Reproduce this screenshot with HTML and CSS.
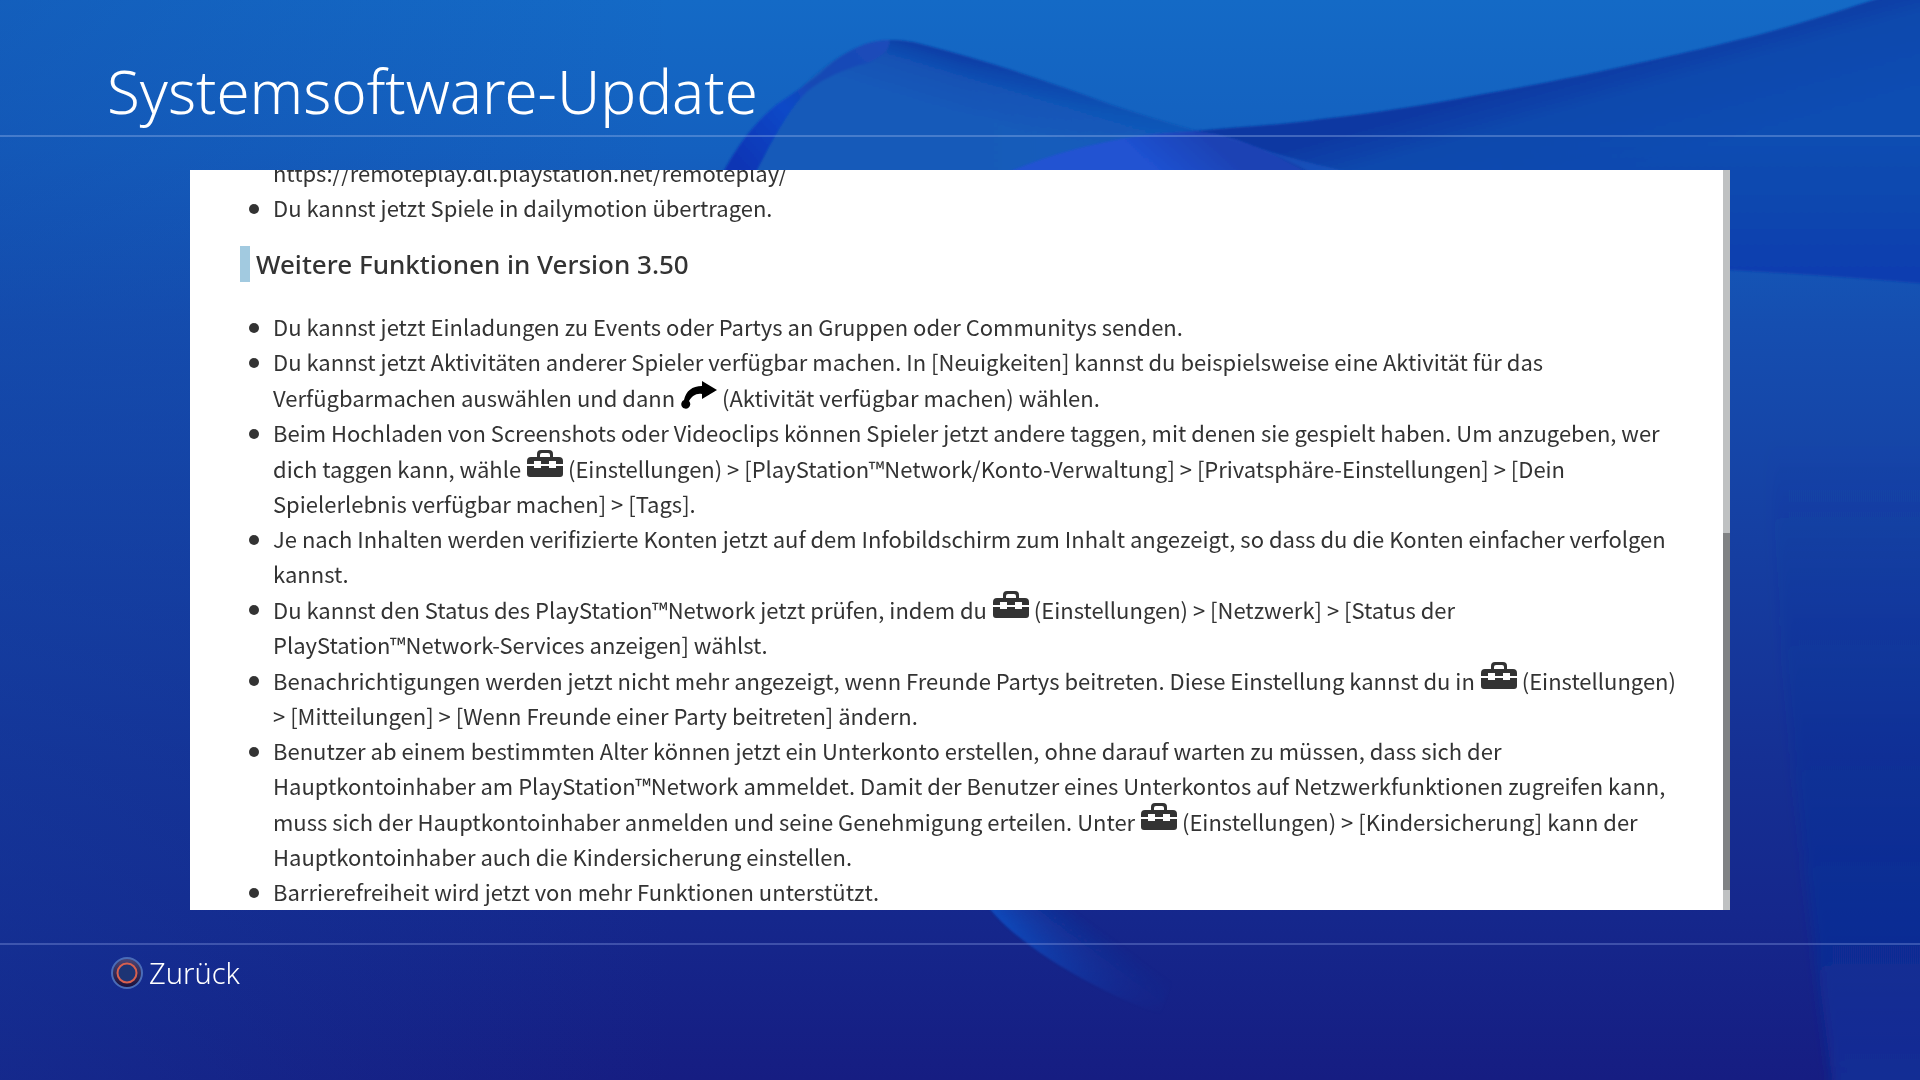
FILE: index.html
```html
<!DOCTYPE html>
<html lang="de">
<head>
<meta charset="utf-8">
<meta name="viewport" content="width=device-width, initial-scale=1">
<title>Systemsoftware-Update</title>
<link rel="stylesheet" href="styles.css">
</head>
<body>
<svg class="wallpaper" viewBox="0 0 1920 1080" preserveAspectRatio="none" aria-hidden="true">
  <defs>
    <linearGradient id="base" x1="0" y1="0" x2="0" y2="1">
      <stop offset="0" stop-color="#146ac6"/>
      <stop offset=".14" stop-color="#1460bf"/>
      <stop offset=".3" stop-color="#154eb0"/>
      <stop offset=".5" stop-color="#153fa2"/>
      <stop offset=".7" stop-color="#153094"/>
      <stop offset=".85" stop-color="#15278c"/>
      <stop offset="1" stop-color="#161d82"/>
    </linearGradient>
    <linearGradient id="left" x1="0" y1="0" x2="1" y2="0">
      <stop offset="0" stop-color="#1244a4" stop-opacity=".3"/>
      <stop offset=".35" stop-color="#1244a4" stop-opacity="0"/>
    </linearGradient>
    <linearGradient id="hill" gradientUnits="userSpaceOnUse" x1="1010" y1="68" x2="993" y2="124">
      <stop offset="0" stop-color="#0d3ba4"/>
      <stop offset=".4" stop-color="#1251b4"/>
      <stop offset="1" stop-color="#125ab9"/>
    </linearGradient>
    <linearGradient id="hillFade" gradientUnits="userSpaceOnUse" x1="960" y1="0" x2="1190" y2="0">
      <stop offset="0" stop-color="#1261bf" stop-opacity="0"/>
      <stop offset="1" stop-color="#1261bf" stop-opacity=".7"/>
    </linearGradient>
    <linearGradient id="wing" gradientUnits="userSpaceOnUse" x1="1490" y1="92" x2="1520" y2="200">
      <stop offset="0" stop-color="#0b38a2"/>
      <stop offset=".35" stop-color="#1048ad"/>
      <stop offset="1" stop-color="#104db2"/>
    </linearGradient>
    <linearGradient id="wingShade" gradientUnits="userSpaceOnUse" x1="0" y1="0" x2="0" y2="285">
      <stop offset=".5" stop-color="#1240a8" stop-opacity="0"/>
      <stop offset="1" stop-color="#0f3cb0"/>
    </linearGradient>
    <linearGradient id="violet" gradientUnits="userSpaceOnUse" x1="1200" y1="130" x2="1160" y2="175">
      <stop offset="0" stop-color="#1a42b4"/>
      <stop offset="1" stop-color="#2052d2"/>
    </linearGradient>
    <linearGradient id="ribbon" gradientUnits="userSpaceOnUse" x1="880" y1="45" x2="740" y2="170">
      <stop offset="0" stop-color="#1c4cba"/>
      <stop offset=".4" stop-color="#1448b4"/>
      <stop offset=".6" stop-color="#0f49c8"/>
      <stop offset="1" stop-color="#0a34b4"/>
    </linearGradient>
    <linearGradient id="streak" gradientUnits="userSpaceOnUse" x1="1030" y1="943" x2="1062" y2="900">
      <stop offset="0" stop-color="#0a50c4"/>
      <stop offset="1" stop-color="#1440a8" stop-opacity="0"/>
    </linearGradient>
    <linearGradient id="streakFade" gradientUnits="userSpaceOnUse" x1="0" y1="900" x2="0" y2="1015">
      <stop offset="0" stop-color="#fff"/>
      <stop offset="1" stop-color="#000"/>
    </linearGradient>
    <mask id="fade"><rect width="1920" height="1080" fill="url(#streakFade)"/></mask>
    <linearGradient id="edge" gradientUnits="userSpaceOnUse" x1="0" y1="440" x2="0" y2="1080">
      <stop offset="0" stop-color="#0c329c" stop-opacity="0"/>
      <stop offset=".5" stop-color="#0c329c" stop-opacity=".3"/>
      <stop offset="1" stop-color="#0c329c" stop-opacity=".7"/>
    </linearGradient>
    <filter id="soft"><feGaussianBlur stdDeviation="1"/></filter>
    <filter id="softer"><feGaussianBlur stdDeviation="6"/></filter>
  </defs>
  <rect width="1920" height="1080" fill="url(#base)"/>
  <rect width="1920" height="1080" fill="url(#left)"/>
  <g filter="url(#soft)">
    <path fill="url(#hill)" d="M735 180C770 110 835 41 888 40C905 40 915 42 925 45C985 60 1050 82 1112 105Q1160 121 1194 130L1330 180Z"/>
    <path fill="url(#hillFade)" d="M925 45C985 60 1050 82 1112 105Q1160 121 1194 130L1200 180H925Z"/>
    <path fill="url(#wing)" d="M1194 131C1240 127 1290 124 1322 119C1375 113 1425 105 1478 95C1530 86 1585 75 1634 64C1680 54 1710 47 1750 37C1795 25 1830 14 1867 2L1940 -20V285Q1830 275 1730 270L1330 190Z"/>
    <path fill="url(#wingShade)" d="M1500 92C1560 80 1700 50 1867 2L1940 -20V285Q1830 275 1730 270L1500 240Z"/>
    <path fill="url(#violet)" d="M990 180C1050 152 1120 134 1194 131C1240 135 1280 156 1320 180Z"/>
    <path fill="#2462cc" opacity=".45" d="M1205 132C1245 143 1290 160 1350 172L1310 172C1280 156 1240 140 1205 132Z"/>
    <path fill="url(#ribbon)" d="M720 178C740 140 758 120 776 105C795 92 808 83 821 73C835 60 860 40 889 40C892 50 875 62 860 65C840 71 815 82 802 97C785 115 770 145 753 178Z"/>
  </g>
  <path fill="url(#edge)" filter="url(#softer)" d="M1770 440C1776 600 1800 850 1835 1100H1950V440Z"/>
  <path fill="url(#streak)" mask="url(#fade)" filter="url(#soft)" d="M984 900C1000 930 1070 980 1160 1015L1180 960L1090 890Z"/>
</svg>

<svg class="sprites" aria-hidden="true">
  <symbol id="toolbox" viewBox="0 0 36 28">
    <path d="M10 7V4Q10 0 14 0H22Q26 0 26 4V7H32Q36 7 36 11V14H29V11H22V14H14V11H7V14H0V11Q0 7 4 7ZM13 7H23V5Q23 3 21 3H15Q13 3 13 5Z"/>
    <path d="M0 16H7V18H14V16H22V18H29V16H36V24Q36 27 33 27H3Q0 27 0 24Z"/>
  </symbol>
  <symbol id="share" viewBox="0 0 36 30">
    <path d="M21 2L36 11L21 20V15C15 14 11 17 8 22A4.500 4.500 0 1 1 3 21C5 12 11 7 21 7Z"/>
  </symbol>
</svg>

<header class="header"><h1 class="title">Systemsoftware-Update</h1></header>

<main class="stage">
  <section class="panel" aria-label="Update-Informationen">
    <div class="notes">
      <ul class="list">
        <li class="item plain">https://remoteplay.dl.playstation.net/remoteplay/</li>
        <li class="item">Du kannst jetzt Spiele in dailymotion übertragen.</li>
      </ul>
      <h2 class="subtitle">Weitere Funktionen in Version 3.50</h2>
      <ul class="list">
        <li class="item">Du kannst jetzt Einladungen zu Events oder Partys an Gruppen oder Communitys senden.</li>
        <li class="item">Du kannst jetzt Aktivitäten anderer Spieler verfügbar machen. In [Neuigkeiten] kannst du beispielsweise eine Aktivität für das<br>Verfügbarmachen auswählen und dann <svg class="icon share"><use href="#share"/></svg> (Aktivität verfügbar machen) wählen.</li>
        <li class="item">Beim Hochladen von Screenshots oder Videoclips können Spieler jetzt andere taggen, mit denen sie gespielt haben. Um anzugeben, wer<br>dich taggen kann, wähle <svg class="icon"><use href="#toolbox"/></svg> (Einstellungen) &gt; [PlayStation™Network/Konto-Verwaltung] &gt; [Privatsphäre-Einstellungen] &gt; [Dein<br>Spielerlebnis verfügbar machen] &gt; [Tags].</li>
        <li class="item">Je nach Inhalten werden verifizierte Konten jetzt auf dem Infobildschirm zum Inhalt angezeigt, so dass du die Konten einfacher verfolgen<br>kannst.</li>
        <li class="item">Du kannst den Status des PlayStation™Network jetzt prüfen, indem du <svg class="icon"><use href="#toolbox"/></svg> (Einstellungen) &gt; [Netzwerk] &gt; [Status der<br>PlayStation™Network-Services anzeigen] wählst.</li>
        <li class="item">Benachrichtigungen werden jetzt nicht mehr angezeigt, wenn Freunde Partys beitreten. Diese Einstellung kannst du in <svg class="icon"><use href="#toolbox"/></svg> (Einstellungen)<br>&gt; [Mitteilungen] &gt; [Wenn Freunde einer Party beitreten] ändern.</li>
        <li class="item">Benutzer ab einem bestimmten Alter können jetzt ein Unterkonto erstellen, ohne darauf warten zu müssen, dass sich der<br>Hauptkontoinhaber am PlayStation™Network ammeldet. Damit der Benutzer eines Unterkontos auf Netzwerkfunktionen zugreifen kann,<br>muss sich der Hauptkontoinhaber anmelden und seine Genehmigung erteilen. Unter <svg class="icon"><use href="#toolbox"/></svg> (Einstellungen) &gt; [Kindersicherung] kann der<br>Hauptkontoinhaber auch die Kindersicherung einstellen.</li>
        <li class="item">Barrierefreiheit wird jetzt von mehr Funktionen unterstützt.</li>
      </ul>
    </div>
    <div class="track"><div class="thumb"></div></div>
  </section>
</main>

<footer class="footer">
  <button class="back" type="button">
    <svg class="circle" viewBox="0 0 32 32" aria-hidden="true">
      <defs><linearGradient id="btn" x1="0" y1="0" x2="0" y2="1"><stop offset="0" stop-color="#4a4678"/><stop offset="1" stop-color="#1a0f3a"/></linearGradient></defs>
      <circle cx="16" cy="16" r="15" fill="url(#btn)" stroke="#4a6cb8" stroke-width="2"/>
      <circle cx="16" cy="16" r="9.500" fill="#1d3474" stroke="#d8604e" stroke-width="2"/>
    </svg>
    <span>Zurück</span>
  </button>
</footer>
</body>
</html>
```
FILE: styles.css
```css
* { box-sizing: border-box; margin: 0; padding: 0; }

body {
  display: flex;
  flex-direction: column;
  min-height: 100vh;
  background: #15308f;
  color: #fff;
  font-family: "Noto Sans", sans-serif;
}

.wallpaper {
  position: fixed;
  inset: 0;
  z-index: -1;
  width: 100%;
  height: 100%;
}

.sprites { position: absolute; width: 0; height: 0; }

.header {
  padding: 50px 107px 3px;
  border-bottom: 2px solid rgba(160, 190, 240, .35);
}

.title {
  font-size: 60px;
  font-weight: 300;
  line-height: 82px;
}

.stage {
  display: flex;
  flex: 1;
  min-height: 0;
  padding: 33px 190px;
}

.panel {
  display: flex;
  flex: 1;
  height: 740px;
  overflow: hidden;
  background: #fff;
  color: #333;
}

.notes {
  display: flex;
  flex: 1;
  flex-direction: column;
  justify-content: flex-end;
  padding: 0 0 1px 50px;
  overflow: hidden;
}

.list {
  padding-left: 33px;
  list-style: none;
  font: 22px/35px "Noto Sans CJK JP", "Noto Sans", sans-serif;
  white-space: nowrap;
}

.item { position: relative; }

.item::before {
  content: "";
  position: absolute;
  top: 14px;
  left: -24px;
  width: 10px;
  height: 10px;
  border-radius: 50%;
  background: #333;
}

.plain::before { content: none; }

.subtitle {
  margin: 21px 0 27px;
  padding-left: 6px;
  border-left: 10px solid #a2cae0;
  font-size: 26px;
  font-weight: 500;
  line-height: 36px;
}

.icon {
  width: 36px;
  height: 28px;
  margin-left: 1px;
  fill: #333;
}

.share {
  height: 30px;
  vertical-align: -2px;
  fill: #000;
}

.track {
  flex: none;
  width: 7px;
  padding: 363px 0 20px;
  background: #bfc1c2;
}

.thumb { height: 100%; background: #808284; }

.footer {
  min-height: 137px;
  padding: 10px 111px;
  border-top: 2px solid rgba(140, 160, 230, .35);
}

.back {
  display: flex;
  align-items: center;
  gap: 6px;
  border: 0;
  background: none;
  color: #fff;
  font: 300 29px/36px "Noto Sans", sans-serif;
}

.circle { width: 32px; height: 32px; }
```
